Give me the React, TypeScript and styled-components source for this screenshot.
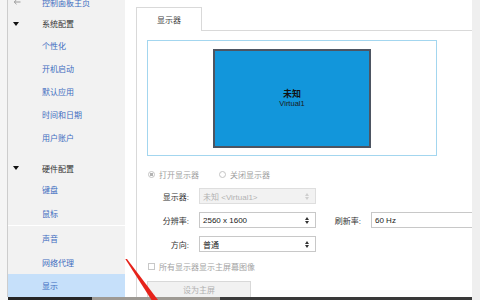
import React from "react";
import styled, { createGlobalStyle } from "styled-components";

const GlobalStyle = createGlobalStyle`
  html, body {
    margin: 0;
    padding: 0;
    background: #fff;
  }
  body {
    font-family: "Liberation Sans", "Noto Sans CJK SC", sans-serif;
    font-size: 8px;
    color: #333;
  }
`;

const Screen = styled.div`
  position: relative;
  width: 480px;
  height: 300px;
  overflow: hidden;
  display: flex;
  flex-direction: column;
  background: #fff;
`;

const Body = styled.div`
  display: flex;
  height: 297px;
  overflow: hidden;
`;

const LeftEdge = styled.div`
  width: 7px;
  background: #f5f5f5;
  border-right: 1px solid #cdcdcd;
`;

const Sidebar = styled.nav`
  width: 117px;
  background: #f2f2f2;
  display: flex;
  flex-direction: column;
`;

const Row = styled.div<{ h: number; active?: boolean }>`
  height: ${({ h }) => h}px;
  flex-shrink: 0;
  display: flex;
  align-items: center;
  background: ${({ active }) => (active ? "#c6e0fa" : "transparent")};
`;

const HomeRow = styled(Row)`
  margin-top: -9px;
`;

const IconSlot = styled.div`
  width: 29px;
  padding-left: 5px;
  display: flex;
  align-items: center;
`;

const Caret = styled.span`
  width: 0;
  height: 0;
  border-left: 3px solid transparent;
  border-right: 3px solid transparent;
  border-top: 4px solid #111;
`;

const HeaderText = styled.span`
  color: #333;
`;

const LinkText = styled.span`
  color: #3d6cc0;
`;

const GroupGap = styled.div`
  height: 10px;
  flex-shrink: 0;
`;

const Separator = styled.div`
  height: 1px;
  flex-shrink: 0;
  background: #fff;
`;

const Spacer = styled.div`
  width: 11px;
  background: #fff;
`;

const Main = styled.section`
  width: 336px;
  display: flex;
  flex-direction: column;
  overflow: hidden;
`;

const TabRow = styled.div`
  height: 31px;
  display: flex;
  align-items: flex-end;
  flex-shrink: 0;
`;

const Tab = styled.div`
  width: 64px;
  height: 23px;
  border: 1px solid #d9d9d9;
  border-bottom: none;
  display: flex;
  align-items: center;
  justify-content: center;
  color: #444;
`;

const TabFill = styled.div`
  flex: 1;
  border-bottom: 1px solid #d9d9d9;
`;

const Panel = styled.div`
  flex: 1;
  border-left: 1px solid #d9d9d9;
  padding-left: 10px;
  display: flex;
  flex-direction: column;
`;

const Frame = styled.div`
  margin-top: 9px;
  width: 288px;
  height: 114px;
  border: 1px solid #a3d6ef;
  display: flex;
  align-items: center;
  justify-content: center;
  flex-shrink: 0;
`;

const Monitor = styled.div`
  width: 154px;
  height: 95px;
  background: #1296db;
  border: 2px solid #4d5562;
  display: flex;
  flex-direction: column;
  align-items: center;
  justify-content: center;
`;

const MonitorName = styled.div`
  font-size: 9px;
  font-weight: bold;
  color: #111;
  line-height: 10px;
`;

const MonitorSub = styled.div`
  font-size: 7.5px;
  color: #1a1a1a;
  line-height: 9px;
`;

const RadioRow = styled.div`
  margin-top: 12px;
  height: 12px;
  display: flex;
  align-items: center;
  flex-shrink: 0;
`;

const Radio = styled.label<{ checked?: boolean }>`
  display: flex;
  align-items: center;
  color: #a0a0a0;
  margin-right: 19px;
  margin-left: 1px;

  &::before {
    content: "";
    box-sizing: border-box;
    width: 7px;
    height: 7px;
    border-radius: 50%;
    border: 1px solid #c4c4c4;
    margin-right: 4px;
    background: ${({ checked }) =>
      checked ? "radial-gradient(circle, #b4b4b4 0 1.6px, #fff 2px)" : "#fff"};
  }
`;

const FormRow = styled.div<{ first?: boolean }>`
  margin-top: ${({ first }) => (first ? 8 : 8)}px;
  height: 16px;
  display: flex;
  align-items: center;
  flex-shrink: 0;
`;

const Label = styled.span<{ w: number; ml?: number }>`
  width: ${({ w }) => w}px;
  margin-left: ${({ ml }) => ml || 0}px;
  margin-right: 10px;
  text-align: right;
  color: #333;
  flex-shrink: 0;
  white-space: nowrap;
`;

const Field = styled.div<{ w: number; disabled?: boolean }>`
  box-sizing: border-box;
  width: ${({ w }) => w}px;
  height: 16px;
  flex-shrink: 0;
  border: 1px solid ${({ disabled }) => (disabled ? "#dedede" : "#c8c8c8")};
  background: ${({ disabled }) => (disabled ? "#f2f2f2" : "#fff")};
  color: ${({ disabled }) => (disabled ? "#b2b2b2" : "#1a1a1a")};
  display: flex;
  align-items: center;
  padding-left: 3px;
`;

const FieldValue = styled.span`
  flex: 1;
  white-space: nowrap;
`;

const Spinner = styled.span<{ disabled?: boolean }>`
  width: 4px;
  margin-right: 6px;
  display: flex;
  flex-direction: column;
  gap: 1px;

  &::before,
  &::after {
    content: "";
    width: 0;
    height: 0;
    border-left: 2px solid transparent;
    border-right: 2px solid transparent;
  }
  &::before {
    border-bottom: 3px solid ${({ disabled }) => (disabled ? "#cfcfcf" : "#333")};
  }
  &::after {
    border-top: 3px solid ${({ disabled }) => (disabled ? "#cfcfcf" : "#333")};
  }
`;

const CheckRow = styled.label`
  margin-top: 10px;
  height: 9px;
  display: flex;
  align-items: center;
  color: #a4a4a4;
  flex-shrink: 0;

  &::before {
    content: "";
    box-sizing: border-box;
    width: 7px;
    height: 7px;
    margin-left: 1px;
    margin-right: 4px;
    border: 1px solid #c8c8c8;
    background: #fff;
  }
`;

const Button = styled.div`
  box-sizing: border-box;
  margin-top: 10px;
  width: 104px;
  height: 20px;
  flex-shrink: 0;
  border: 1px solid #d8d8d8;
  background: #f1f1f1;
  color: #b0b0b0;
  text-align: center;
  line-height: 17px;
`;

const RightStrip = styled.div`
  width: 8px;
  background: #efefef;
`;

const BottomBar = styled.div`
  height: 3px;
  display: flex;
`;

const BarPart = styled.div<{ w: number; color: string }>`
  width: ${({ w }) => w}px;
  background: ${({ color }) => color};
`;

const Arrow = styled.svg`
  position: absolute;
  left: 0;
  top: 0;
  pointer-events: none;
`;

const systemItems = ["个性化", "开机启动", "默认应用", "时间和日期", "用户账户"];
const hardwareItems = ["键盘", "鼠标"];
const otherItems = ["声音", "网络代理"];

export default function App() {
  return (
    <>
      <GlobalStyle />
      <Screen>
        <Body>
          <LeftEdge />
          <Sidebar>
            <HomeRow h={22}>
              <IconSlot>
                <svg width="8" height="6" viewBox="0 0 8 6">
                  <path d="M7.5 3H1.5M3.5 0.8L1.2 3l2.3 2.2" stroke="#9a9a9a" strokeWidth="1" fill="none" />
                </svg>
              </IconSlot>
              <LinkText>控制面板主页</LinkText>
            </HomeRow>
            <Row h={21}>
              <IconSlot>
                <Caret />
              </IconSlot>
              <HeaderText>系统配置</HeaderText>
            </Row>
            {systemItems.map((t) => (
              <Row h={23} key={t}>
                <IconSlot />
                <LinkText>{t}</LinkText>
              </Row>
            ))}
            <GroupGap />
            <Row h={18}>
              <IconSlot>
                <Caret />
              </IconSlot>
              <HeaderText>硬件配置</HeaderText>
            </Row>
            {hardwareItems.map((t) => (
              <Row h={24} key={t}>
                <IconSlot />
                <LinkText>{t}</LinkText>
              </Row>
            ))}
            <Separator />
            {otherItems.map((t) => (
              <Row h={24} key={t}>
                <IconSlot />
                <LinkText>{t}</LinkText>
              </Row>
            ))}
            <Row h={23} active>
              <IconSlot />
              <LinkText>显示</LinkText>
            </Row>
          </Sidebar>
          <Spacer />
          <Main>
            <TabRow>
              <Tab>显示器</Tab>
              <TabFill />
            </TabRow>
            <Panel>
              <Frame>
                <Monitor>
                  <MonitorName>未知</MonitorName>
                  <MonitorSub>Virtual1</MonitorSub>
                </Monitor>
              </Frame>
              <RadioRow>
                <Radio checked>打开显示器</Radio>
                <Radio>关闭显示器</Radio>
              </RadioRow>
              <FormRow first>
                <Label w={42}>显示器:</Label>
                <Field w={117} disabled>
                  <FieldValue>未知 &lt;Virtual1&gt;</FieldValue>
                  <Spinner disabled />
                </Field>
              </FormRow>
              <FormRow>
                <Label w={42}>分辨率:</Label>
                <Field w={117}>
                  <FieldValue>2560 x 1600</FieldValue>
                  <Spinner />
                </Field>
                <Label w={27} ml={18}>刷新率:</Label>
                <Field w={130}>
                  <FieldValue>60 Hz</FieldValue>
                </Field>
              </FormRow>
              <FormRow>
                <Label w={42}>方向:</Label>
                <Field w={117}>
                  <FieldValue>普通</FieldValue>
                  <Spinner />
                </Field>
              </FormRow>
              <CheckRow>所有显示器显示主屏幕图像</CheckRow>
              <Button>设为主屏</Button>
            </Panel>
          </Main>
          <RightStrip />
        </Body>
        <BottomBar>
          <BarPart w={8} color="#f5f5f5" />
          <BarPart w={84} color="#262626" />
          <BarPart w={128} color="#9e9a94" />
          <BarPart w={252} color="#3a3a3a" />
          <BarPart w={8} color="#efefef" />
        </BottomBar>
        <Arrow width="480" height="300" viewBox="0 0 480 300">
          <polygon points="125.3,259 127,259 158,300 151.5,300" fill="#e6231b" />
        </Arrow>
      </Screen>
    </>
  );
}
